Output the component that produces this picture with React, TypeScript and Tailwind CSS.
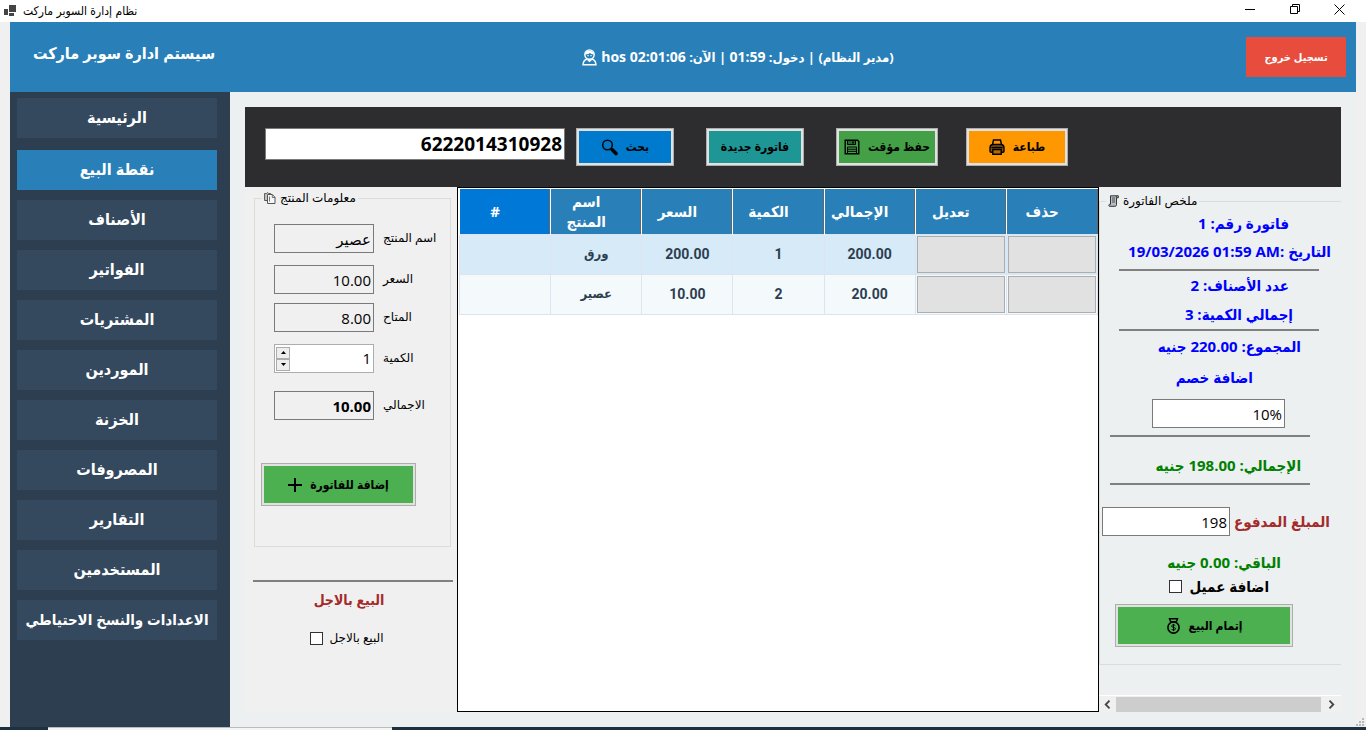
import type { ReactNode } from 'react';
import { clsx } from 'clsx';

const UI_FONT = "font-['Open_Sans','Noto_Sans','DejaVu_Sans',sans-serif]";
// bold Arabic is set in the condensed cut, digits stay in Open Sans
const BOLD_FONT = "font-['Open_Sans','DejaVu_Sans_Condensed','DejaVu_Sans',sans-serif] font-bold";

const navItems = [
    'الرئيسية',
    'نقطة البيع',
    'الأصناف',
    'الفواتير',
    'المشتريات',
    'الموردين',
    'الخزنة',
    'المصروفات',
    'التقارير',
    'المستخدمين',
    'الاعدادات والنسخ الاحتياطي',
];

const columns = ['#', 'اسم المنتج', 'السعر', 'الكمية', 'الإجمالي', 'تعديل', 'حذف'];

const rows = [
    { name: 'ورق', price: '200.00', qty: '1', total: '200.00' },
    { name: 'عصير', price: '10.00', qty: '2', total: '20.00' },
];

function UserIcon() {
    return (
        <svg width="15" height="17" viewBox="0 0 15 17" fill="none" stroke="currentColor" strokeWidth="1.4" className="shrink-0">
            <circle cx="7.5" cy="5.6" r="4.7" />
            <path d="M3 5.4C3.4 2.6 5 1.4 7.5 1.4s4.2 1.2 4.5 4C10.300 5.600 9 5 8 4 6.800 5 5 5.600 3 5.400z" fill="currentColor" stroke="none" />
            <path d="M5.300 6.700h1.500M8.300 6.700h1.500" strokeWidth="1" />
            <path d="M5 10c-2.400.8-3.800 2.300-4 5.800h13c-.2-3.500-1.600-5-4-5.800M5.500 10.500l2 1.800 2-1.800" />
        </svg>
    );
}

function SearchIcon() {
    return (
        <svg width="17" height="17" viewBox="0 0 17 17" fill="none" stroke="currentColor" className="shrink-0">
            <circle cx="6.500" cy="6" r="4.800" strokeWidth="1.500" />
            <path d="M9.800 9.600l1.400 1.400" strokeWidth="1.500" />
            <path d="M11.300 10.800l3.700 3.700" strokeWidth="3.600" strokeLinecap="round" />
        </svg>
    );
}

function SaveIcon() {
    return (
        <svg width="16" height="16" viewBox="0 0 16 16" fill="none" stroke="currentColor" className="shrink-0">
            <path d="M1.200 1.200h12.300l1.300 1.300v12.300H1.200z" strokeWidth="1.400" />
            <path d="M3.500 1.500h8v4h-8z" fill="currentColor" fillOpacity=".35" />
            <path d="M9 2.500v2" strokeWidth="1.500" />
            <path d="M3.500 8h9v6.500h-9zM4 10.200h8M4 12.300h8" strokeWidth="1" />
        </svg>
    );
}

function PrintIcon() {
    return (
        <svg width="16" height="16" viewBox="0 0 16 16" fill="none" stroke="currentColor" strokeWidth="1.400" className="shrink-0">
            <path d="M3.500 5.500L4.500 1h7l1 4.500" />
            <path d="M3.500 5.500h9c1.600.4 2.500 1.500 2.500 3.200v3.600c0 .6-.4 1-1 1H2c-.6 0-1-.4-1-1V8.700c0-1.700.9-2.800 2.500-3.200z" fill="currentColor" fillOpacity=".45" />
            <path d="M2.500 8.500h11" />
            <path d="M3.800 10.500h8.400v4.700H3.800z" fill="#b26a00" />
        </svg>
    );
}

function MoneyBagIcon() {
    return (
        <svg width="15" height="16" viewBox="0 0 15 16" fill="none" stroke="currentColor" className="shrink-0">
            <path d="M4.500 3.500L3.500.8h8l-1 2.700M4.200 3.700h6.600" strokeWidth="1.400" />
            <circle cx="7.500" cy="9.500" r="5.600" strokeWidth="1.600" />
            <path d="M9.300 7.800c-.4-.7-1-.9-1.800-.9-1 0-1.800.4-1.800 1.200 0 1.900 3.700.8 3.700 2.700 0 .8-.8 1.300-1.900 1.300-.9 0-1.600-.4-1.900-1.100M7.500 5.900v7.200" strokeWidth="1" />
        </svg>
    );
}

function PagesIcon() {
    return (
        <svg width="12" height="12" viewBox="0 0 12 12" fill="none" stroke="#555" className="shrink-0">
            <path d="M.6 1.500h2l1-1 1 1h2v7h-6z" fill="#cfc6b8" />
            <path d="M3.500 2.500h4.800L11 5.300v6.200H3.500z" fill="#f6f6f6" />
            <path d="M8.300 2.500v3H11M5.500 4.500v5" strokeWidth=".8" />
        </svg>
    );
}

function ReceiptIcon() {
    return (
        <svg width="11" height="12" viewBox="0 0 11 12" fill="none" stroke="#333" className="shrink-0">
            <path d="M2.500.8h7.800v2H8.500v6.500c0 1.500-.5 2-1.500 2H1.500c-1 0-1-2 .2-2h.8z" fill="#b9bcc6" />
            <path d="M4 3h3M4 5h3M4 7h3M8.400.8v2" strokeWidth=".8" />
        </svg>
    );
}

function FramedButton({ className, children }: { className?: string; children: ReactNode }) {
    return (
        <button
            type="button"
            dir="rtl"
            className={clsx(
                'flex items-center justify-center gap-2 border border-[#adadad] text-xs whitespace-nowrap text-black shadow-[inset_0_0_0_2px_#e1e1e1]',
                BOLD_FONT,
                className,
            )}
        >
            {children}
        </button>
    );
}

function ProductField({ id, label, value, bold, className }: { id: string; label: string; value: string; bold?: boolean; className?: string }) {
    return (
        <div className={clsx('flex items-center gap-[9px]', className)}>
            <input
                id={id}
                readOnly
                defaultValue={value}
                className={clsx('h-[29px] w-[100px] border border-[#7a7a7a] bg-[#f0f0f0] px-0.5 text-right text-[15px]', bold && 'font-bold')}
            />
            <label htmlFor={id} className="pb-0.5 text-xs">{label}</label>
        </div>
    );
}

function Rule({ className }: { className?: string }) {
    return <hr className={clsx('h-0.5 w-[200px] border-0 bg-[#808080]', className)} />;
}

function TitleBar() {
    return (
        <div className="flex h-[22px] items-center bg-white pr-1 pl-1">
            <svg width="13" height="13" viewBox="0 0 13 13" fill="#444">
                <path d="M0 4h4v6H0zM5 0h7v7H5zM5 8h5v3H5z" />
            </svg>
            <span dir="rtl" className="ml-1.5 font-['DejaVu_Sans_Condensed','DejaVu_Sans',sans-serif] text-xs text-black">نظام إدارة السوبر ماركت</span>
            <div className="ml-auto flex pb-1">
                <button type="button" aria-label="تصغير" className="flex h-5 w-[45px] items-center justify-center">
                    <svg width="10" height="10" viewBox="0 0 10 10" stroke="#000"><path d="M0 5.500h10" /></svg>
                </button>
                <button type="button" aria-label="استعادة" className="flex h-5 w-[45px] items-center justify-center">
                    <svg width="10" height="10" viewBox="0 0 10 10" fill="none" stroke="#000"><path d="M.5 2.500h7v7h-7zM2.500 2.500v-2h7v7h-2" /></svg>
                </button>
                <button type="button" aria-label="إغلاق" className="flex h-5 w-[45px] items-center justify-center">
                    <svg width="11" height="11" viewBox="0 0 11 11" stroke="#000"><path d="M.5.5l10 10M10.500.5l-10 10" /></svg>
                </button>
            </div>
        </div>
    );
}

function Header() {
    return (
        <header className="flex h-[70px] items-center bg-[#2980b9] pr-2.5 text-white">
            <h1 dir="rtl" className={clsx('w-[220px] shrink-0 pb-2 pl-2 text-center text-base whitespace-nowrap', BOLD_FONT)}>
                سيستم ادارة سوبر ماركت
            </h1>
            <div dir="rtl" className={clsx('flex flex-1 items-center justify-center gap-1 text-[13px]', BOLD_FONT)}>
                <span>
                    (مدير النظام) | دخول: <span className="text-sm">01:59</span> | الآن:{' '}
                    <span dir="ltr" className="text-sm">hos 02:01:06</span>
                </span>
                <UserIcon />
            </div>
            <button type="button" className={clsx('h-10 w-[100px] bg-[#e74c3c] text-[11px]', BOLD_FONT)}>تسجيل خروج</button>
        </header>
    );
}

function Sidebar() {
    return (
        <nav className="flex w-[220px] shrink-0 flex-col gap-2.5 bg-[#2c3e50] px-[7px] pt-1.5 text-white">
            {navItems.map((item, i) => (
                <button
                    key={item}
                    type="button"
                    className={clsx(
                        'h-10 w-[200px] pb-0.5 whitespace-nowrap',
                        BOLD_FONT,
                        i === 0 && 'mb-0.5',
                        i === 1 ? 'bg-[#2980b9]' : 'bg-[#34495e]',
                        i === navItems.length - 1 ? 'text-[15px]' : 'text-base',
                    )}
                >
                    {item}
                </button>
            ))}
        </nav>
    );
}

function Toolbar() {
    return (
        <div className="flex h-20 items-start bg-[#2d2d30] px-5 pt-[21px]">
            <input
                aria-label="الباركود"
                defaultValue="6222014310928"
                className="mr-[11px] h-8 w-[300px] border border-[#7a7a7a] bg-white px-0.5 text-right text-[19px] font-bold"
            />
            <FramedButton className="mr-8 h-[38px] w-[98px] bg-[#007acc]">بحث <SearchIcon /></FramedButton>
            <FramedButton className="mr-8 h-[38px] w-[98px] bg-[#1e9696]">فاتورة جديدة</FramedButton>
            <FramedButton className="mr-7 h-[38px] w-[102px] bg-[#43a047]">حفظ مؤقت <SaveIcon /></FramedButton>
            <FramedButton className="h-[38px] w-[102px] bg-[#ff9800]">طباعة <PrintIcon /></FramedButton>
        </div>
    );
}

function ProductPanel() {
    return (
        <section className="w-[212px] shrink-0 bg-[#f0f0f0] pt-px pr-1 pl-2">
            <fieldset className="mr-0.5 ml-px h-[359px] border border-[#dcdcdc] px-1.5">
                <legend className="ml-px flex h-5 items-center gap-1 px-0.5 text-xs whitespace-nowrap">
                    <PagesIcon />
                    <span dir="rtl">معلومات المنتج</span>
                </legend>
                <div className="pt-4 pl-[13px]">
                    <ProductField id="name" label="اسم المنتج" value="عصير" />
                    <ProductField id="price" label="السعر" value="10.00" className="mt-3" />
                    <ProductField id="available" label="المتاح" value="8.00" className="mt-[9px]" />
                    <div className="mt-3 flex items-center gap-[9px]">
                        <div className="flex h-[29px] w-[100px] items-center border border-[#abadb3] bg-white pl-px">
                            <div className="flex flex-col">
                                <button type="button" aria-label="زيادة" className="flex h-3 w-3.5 items-center justify-center border border-[#acacac] bg-[#eee]">
                                    <svg width="5" height="3" viewBox="0 0 5 3"><path d="M2.500 0L5 3H0z" /></svg>
                                </button>
                                <button type="button" aria-label="إنقاص" className="flex h-3 w-3.5 items-center justify-center border border-[#acacac] bg-[#eee]">
                                    <svg width="5" height="3" viewBox="0 0 5 3"><path d="M2.500 3L5 0H0z" /></svg>
                                </button>
                            </div>
                            <input id="qty" defaultValue="1" className="w-full min-w-0 px-0.5 text-right text-[15px]" />
                        </div>
                        <label htmlFor="qty" className="pb-0.5 text-xs">الكمية</label>
                    </div>
                    <ProductField id="total" label="الاجمالي" value="10.00" bold className="mt-[18px]" />
                </div>
                <FramedButton className="mt-[43px] h-[43px] w-[155px] bg-[#4caf50]">
                    إضافة للفاتورة
                    <svg width="14" height="14" viewBox="0 0 14 14" stroke="currentColor" strokeWidth="2"><path d="M7 0v14M0 7h14" /></svg>
                </FramedButton>
            </fieldset>
            <Rule className="mt-[33px]" />
            <h2 className={clsx('mt-1 pr-2 text-center text-sm leading-7 text-[#a52a2a]', BOLD_FONT)}>البيع بالاجل</h2>
            <div className="mt-4 flex items-center justify-center gap-1.5 pr-3">
                <input id="credit" type="checkbox" className="size-[13px] appearance-none border border-[#333] bg-white" />
                <label htmlFor="credit" className="text-xs">البيع بالاجل</label>
            </div>
        </section>
    );
}

function InvoiceTable() {
    return (
        <section className="min-w-0 flex-1 border border-black bg-white pt-px pl-px">
            <table className="w-full table-fixed border-collapse">
                <thead>
                    <tr className="h-[45px] border-b border-[#666] text-[15px] leading-5 text-white">
                        {columns.map((c, i) => (
                            <th
                                key={c}
                                className={clsx(
                                    'border-l border-white pr-6 pl-1 shadow-[inset_-1px_0_0_#666]',
                                    BOLD_FONT,
                                    i === 0 ? 'bg-[#0078d7]' : 'bg-[#2980b9]',
                                )}
                            >
                                {c}
                            </th>
                        ))}
                    </tr>
                </thead>
                <tbody className="font-['Roboto','DejaVu_Sans_Condensed','DejaVu_Sans',sans-serif] text-sm font-bold text-[#2c3e50]">
                    {rows.map((r, i) => (
                        <tr key={r.name} className={clsx('h-10 text-center', i === 0 ? 'bg-[#d6eaf8]' : 'bg-[#f4f9fc]')}>
                            <td className="border border-[#dce4f0]" />
                            <td className="border border-[#dce4f0] text-[13px]">{r.name}</td>
                            <td className="border border-[#dce4f0]">{r.price}</td>
                            <td className="border border-[#dce4f0]">{r.qty}</td>
                            <td className="border border-[#dce4f0]">{r.total}</td>
                            <td className="border border-[#dce4f0] p-px">
                                <button type="button" aria-label="تعديل" className="block h-[37px] w-full border border-[#adadad] bg-[#e1e1e1]" />
                            </td>
                            <td className="border border-[#dce4f0] p-px">
                                <button type="button" aria-label="حذف" className="block h-[37px] w-full border border-[#adadad] bg-[#e1e1e1]" />
                            </td>
                        </tr>
                    ))}
                </tbody>
            </table>
        </section>
    );
}

function SummaryPanel() {
    return (
        <section className="flex w-[242px] shrink-0 flex-col">
            <fieldset className={clsx('mt-1 h-[474px] min-w-0 border-y border-l border-[#dcdcdc] text-[15px] text-[#0000ff] [&_b]:font-bold', BOLD_FONT)}>
                <legend className={clsx('ml-1.5 flex h-5 items-center gap-1 px-0.5 text-xs font-normal! whitespace-nowrap text-black', UI_FONT)}>
                    <ReceiptIcon />
                    <span dir="rtl">ملخص الفاتورة</span>
                </legend>
                <p dir="rtl" className="pr-13 leading-6">فاتورة رقم: <b>1</b></p>
                <p dir="rtl" className="mt-0.5 pr-2.5 leading-7 whitespace-nowrap">
                    التاريخ :<b dir="ltr">19/03/2026 01:59 AM</b>
                </p>
                <Rule className="mt-1 ml-[19px]" />
                <p dir="rtl" className="pr-13 leading-7">عدد الأصناف: <b>2</b></p>
                <p dir="rtl" className="pr-12 leading-[30px]">إجمالي الكمية: <b>3</b></p>
                <Rule className="ml-[19px]" />
                <p dir="rtl" className="pr-10 leading-[30px]">المجموع: <b>220.00</b> جنيه</p>
                <p dir="rtl" className="pr-22 leading-8"><label htmlFor="discount">اضافة خصم</label></p>
                <input id="discount" defaultValue="10%" className="mt-1.5 ml-[52px] block h-[29px] w-[133px] border border-[#7a7a7a] bg-white px-0.5 text-right text-[15px] font-normal text-black" />
                <Rule className="mt-[7px] ml-2.5" />
                <p dir="rtl" className="mt-3 pr-10 leading-8 text-[#008000]">الإجمالي: <b>198.00</b> جنيه</p>
                <Rule className="mt-0.5 ml-2.5" />
                <div className="mt-5.5 ml-0.5 flex items-center gap-1">
                    <input id="paid" defaultValue="198" className="h-[29px] w-32 border border-[#7a7a7a] bg-white px-0.5 text-right text-[15px] font-normal text-black" />
                    <label htmlFor="paid" className="whitespace-nowrap text-[#a52a2a]">المبلغ المدفوع</label>
                </div>
                <p dir="rtl" className="mt-3 pr-15 leading-7 text-[#008000]">الباقي: <b>0.00</b> جنيه</p>
                <div dir="rtl" className="flex h-5 items-center gap-2 pr-18 text-black">
                    <label htmlFor="client">اضافة عميل</label>
                    <input id="client" type="checkbox" className="size-[13px] appearance-none border border-[#333] bg-white" />
                </div>
                <FramedButton className="mt-2 ml-[15px] h-[43px] w-[178px] bg-[#4caf50]">إتمام البيع <MoneyBagIcon /></FramedButton>
            </fieldset>
            <div className="mt-auto flex h-[17px] items-center border-t border-white bg-[#f0f0f0]">
                <button type="button" aria-label="يسار" className="flex w-[17px] justify-center">
                    <svg width="7" height="9" viewBox="0 0 7 9" fill="none" stroke="#444" strokeWidth="1.800"><path d="M5.500.7L1.700 4.500l3.800 3.800" /></svg>
                </button>
                <div className="h-[15px] flex-1 bg-[#cdcdcd]" />
                <button type="button" aria-label="يمين" className="flex w-5 justify-center">
                    <svg width="7" height="9" viewBox="0 0 7 9" fill="none" stroke="#444" strokeWidth="1.800"><path d="M1.500.7l3.800 3.800-3.800 3.800" /></svg>
                </button>
            </div>
        </section>
    );
}

export default function App() {
    return (
        <div className={clsx('relative flex min-h-screen flex-col bg-[#f0f0f0] text-black', UI_FONT)}>
            <TitleBar />
            <div className="flex flex-1 flex-col px-2.5">
                <Header />
                <div className="flex flex-1">
                    <Sidebar />
                    <main className="flex min-w-0 flex-1 flex-col bg-[#ecf0f1] p-[15px]">
                        <Toolbar />
                        <div className="flex flex-1">
                            <ProductPanel />
                            <InvoiceTable />
                            <SummaryPanel />
                        </div>
                    </main>
                </div>
            </div>
            {/* resize grip */}
            <svg width="8" height="8" viewBox="0 0 8 8" fill="#b8b8b8" className="absolute right-0.5 bottom-1">
                <path d="M6 0h2v2H6zM3 3h2v2H3zM6 3h2v2H6zM0 6h2v2H0zM3 6h2v2H3zM6 6h2v2H6z" />
            </svg>
            <footer className="h-[3px] bg-[#1c3040] pl-12">
                <div className="h-full w-[344px] border-t border-[#bbb] bg-[#f4f4f4]" />
            </footer>
        </div>
    );
}
